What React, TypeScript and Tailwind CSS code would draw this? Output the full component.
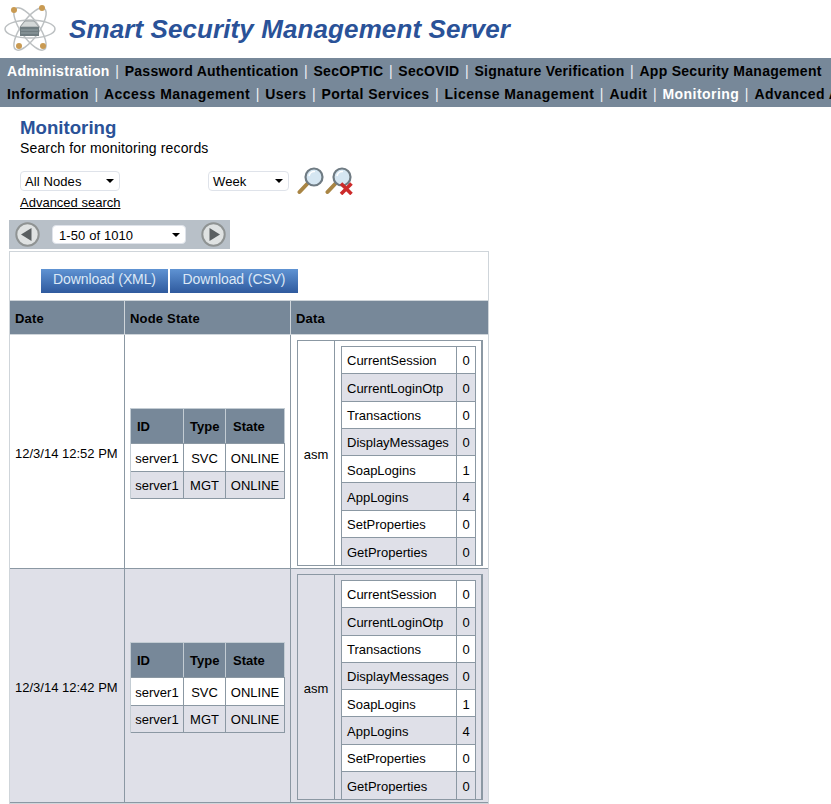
const font = { fontFamily: '"Liberation Sans", Arial, sans-serif' };

const topNav = ["Administration", "Password Authentication", "SecOPTIC", "SecOVID", "Signature Verification", "App Security Management"];
const subNav = ["Information", "Access Management", "Users", "Portal Services", "License Management", "Audit", "Monitoring", "Advanced Authentication"];
const metrics = [
  ["CurrentSession", "0"],
  ["CurrentLoginOtp", "0"],
  ["Transactions", "0"],
  ["DisplayMessages", "0"],
  ["SoapLogins", "1"],
  ["AppLogins", "4"],
  ["SetProperties", "0"],
  ["GetProperties", "0"],
];

function Logo() {
  return (
    <svg width="54" height="52" viewBox="0 0 54 52" className="shrink-0">
      <g fill="none" stroke="#bcc0c2" strokeWidth="1.5">
        <ellipse cx="27" cy="26" rx="25" ry="9" />
        <ellipse cx="27" cy="26" rx="25" ry="9" transform="rotate(55 27 26)" />
        <ellipse cx="27" cy="26" rx="25" ry="9" transform="rotate(-55 27 26)" />
      </g>
      <path d="M17 24 L22 18 H31 L36 24 Z" fill="#d4d8d8" stroke="#8b9294" strokeWidth="0.8" />
      <rect x="17" y="24" width="19" height="9" fill="#6f7c80" />
      <path d="M18 27 H35 M18 30 H35" stroke="#a0abae" strokeWidth="0.8" />
      <circle cx="11" cy="7" r="3" fill="#c99a52" />
      <circle cx="39" cy="5" r="3" fill="#c99a52" />
      <circle cx="16" cy="43" r="3" fill="#c99a52" />
      <circle cx="40" cy="43" r="3" fill="#c99a52" />
    </svg>
  );
}

function Magnifier({ clear }: { clear?: boolean }) {
  return (
    <svg width="28" height="28" viewBox="0 0 28 28" className="shrink-0">
      <path d="M2.5 25 L11 16" stroke="#a98544" strokeWidth="4" strokeLinecap="round" />
      <circle cx="17" cy="10" r="8.5" fill="#d5e6f2" stroke="#6f7b83" strokeWidth="2.2" />
      <path d="M12 9 A5.5 5.5 0 0 1 18 4.5" fill="none" stroke="#ffffff" strokeWidth="1.6" />
      {clear && <path d="M16 16.5 L26.5 27 M26.5 16.5 L16 27" stroke="#cc2a2a" strokeWidth="3.6" />}
    </svg>
  );
}

function ArrowButton({ right }: { right?: boolean }) {
  return (
    <svg width="25" height="25" viewBox="0 0 25 25" className="shrink-0">
      <circle cx="12.5" cy="12.5" r="11.2" fill="#dfe2e2" stroke="#8f9393" strokeWidth="2" />
      <path d={right ? "M8.5 6 L19 12.5 L8.5 19 Z" : "M16.5 6 L6 12.5 L16.5 19 Z"} fill="#5a5f61" />
    </svg>
  );
}

function FakeSelect({ label, className }: { label: string; className: string }) {
  return (
    <div className={`flex items-center justify-between bg-white border border-[#dfe3ea] rounded-sm pl-[4px] pr-[4px] text-[13px] tracking-[0.1px] text-black ${className}`}>
      <span className="pt-[2px]">{label}</span>
      <span className="w-0 h-0 border-l-[4px] border-r-[4px] border-t-[4px] border-l-transparent border-r-transparent border-t-black mr-[1px]" />
    </div>
  );
}

function NavRow({ items, active, className }: { items: string[]; active: string; className: string }) {
  return (
    <div className={`flex items-center h-[23px] whitespace-nowrap text-[14px] font-bold ${className}`}>
      {items.map((item, i) => (
        <span key={item} className="flex items-center">
          {i > 0 && <span className="text-[#eef1f4] font-normal mx-[5.5px]">|</span>}
          <span className={item === active ? "text-white" : "text-black"}>{item}</span>
        </span>
      ))}
    </div>
  );
}

function NodeTable() {
  const rows = [
    ["server1", "SVC", "ONLINE", "bg-white"],
    ["server1", "MGT", "ONLINE", "bg-[#dfe0e8]"],
  ];
  return (
    <div className="w-[155px] border-t border-l border-[#c3ccd3] text-[13px] text-black">
      <div className="flex h-[35px] bg-[#778899] font-bold items-center border-b border-[#8b98a3]">
        <div className="w-[53px] h-full flex items-center pl-[6px] pt-[2px] border-r border-[#c3ccd3]">ID</div>
        <div className="w-[42px] h-full flex items-center pl-[6px] pt-[2px] border-r border-[#c3ccd3]">Type</div>
        <div className="flex-1 h-full flex items-center pl-[7px] pt-[2px] border-r border-[#c3ccd3]">State</div>
      </div>
      {rows.map((r, i) => (
        <div key={i} className={`flex h-[27.5px] items-center border-b border-r border-[#8b98a3] ${r[3]}`}>
          <div className="w-[53px] h-full flex items-center justify-center pt-[2px] border-r border-[#8b98a3]">{r[0]}</div>
          <div className="w-[42px] h-full flex items-center justify-center pt-[2px] border-r border-[#8b98a3]">{r[1]}</div>
          <div className="flex-1 h-full flex items-center justify-center pt-[2px]">{r[2]}</div>
        </div>
      ))}
    </div>
  );
}

function DataTable() {
  return (
    <div className="flex w-[186px] h-[226px] border border-[#8b98a3] border-r-2 text-[13px] text-black">
      <div className="w-[37px] flex items-center justify-center border-r border-[#8b98a3] pt-[3px]">asm</div>
      <div className="pl-[6px] pt-[5px]">
        <div className="w-[135px] border border-[#8b98a3]">
          {metrics.map(([name, value], i) => (
            <div
              key={name}
              className={`flex h-[27.3px] border-b last:border-b-0 border-[#8b98a3] ${i % 2 ? "bg-[#dfe0e8]" : "bg-white"}`}
            >
              <div className="w-[115px] flex items-center pl-[5px] pt-[2px] border-r border-[#8b98a3]">{name}</div>
              <div className="flex-1 flex items-center justify-center pt-[2px]">{value}</div>
            </div>
          ))}
        </div>
      </div>
    </div>
  );
}

function RecordRow({ date, alt }: { date: string; alt?: boolean }) {
  return (
    <div className={`flex h-[234px] border-b border-[#8b98a3] text-[13px] text-black ${alt ? "bg-[#dfe0e8]" : "bg-white"}`}>
      <div className="w-[115px] flex items-center pl-[5px] pt-[4px] border-r border-[#8b98a3] whitespace-nowrap">{date}</div>
      <div className="w-[166px] flex items-center pl-[5px] border-r border-[#8b98a3] pt-[4px]">
        <NodeTable />
      </div>
      <div className="flex-1 pl-[6px] pt-[5px]">
        <DataTable />
      </div>
    </div>
  );
}

export default function App() {
  return (
    <div className="w-[831px] h-[804px] overflow-hidden bg-white" style={font}>
      <header className="flex items-center h-[58px] pl-[3px]">
        <Logo />
        <h1 className="ml-[12px] text-[26px] font-bold italic text-[#2a5298] whitespace-nowrap tracking-[0.1px]">
          Smart Security Management Server
        </h1>
      </header>

      <nav className="h-[49px] bg-[#778899] pl-[7px] pt-[2px] overflow-hidden">
        <NavRow items={topNav} active="Administration" className="tracking-[0.28px]" />
        <NavRow items={subNav} active="Monitoring" className="tracking-[0.45px]" />
      </nav>

      <section className="pl-[20px] pt-[10px]">
        <h2 className="text-[18.67px] leading-[22px] font-bold text-[#2a5298]">Monitoring</h2>
        <p className="text-[14px] leading-[18px] tracking-[0.14px] text-black">Search for monitoring records</p>
        <div className="flex items-center mt-[10px] h-[28px]">
          <FakeSelect label="All Nodes" className="w-[100px] h-[20px]" />
          <FakeSelect label="Week" className="w-[81px] h-[20px] ml-[88px]" />
          <div className="ml-[8px] flex">
            <Magnifier />
            <Magnifier clear />
          </div>
        </div>
        <a className="block text-[13px] leading-[16px] mt-0 h-[15px] underline text-black">Advanced search</a>
      </section>

      <div className="flex items-center ml-[9px] mt-[10px] w-[221px] h-[29px] bg-[#b8c0c8] pl-[6px]">
        <ArrowButton />
        <FakeSelect label="1-50 of 1010" className="w-[134px] h-[19px] ml-[12px] !pl-[6px]" />
        <div className="ml-[15px]">
          <ArrowButton right />
        </div>
      </div>

      <div className="ml-[9px] mt-[2px] w-[480px] border border-[#cfd5da]">
        <div className="flex gap-[2px] h-[48px] pl-[31px] pt-[17px]">
          <button className="w-[127px] h-[24px] pb-[4px] bg-gradient-to-b from-[#5f93d3] to-[#2f5a9e] text-[14px] tracking-[-0.1px] text-[#dce8f6]">
            Download (XML)
          </button>
          <button className="w-[128px] h-[24px] pb-[4px] bg-gradient-to-b from-[#5f93d3] to-[#2f5a9e] text-[14px] tracking-[-0.1px] text-[#dce8f6]">
            Download (CSV)
          </button>
        </div>
        <div className="flex h-[35px] bg-[#778899] border-t border-b border-[#cfd5da] text-[13px] tracking-[0.2px] font-bold text-black">
          <div className="w-[115px] flex items-center pl-[5px] pt-[2px] border-r border-[#cfd5da]">Date</div>
          <div className="w-[166px] flex items-center pl-[5px] pt-[2px] border-r border-[#cfd5da]">Node State</div>
          <div className="flex-1 flex items-center pl-[5px] pt-[2px]">Data</div>
        </div>
        <RecordRow date="12/3/14 12:52 PM" />
        <RecordRow date="12/3/14 12:42 PM" alt />
      </div>
    </div>
  );
}
